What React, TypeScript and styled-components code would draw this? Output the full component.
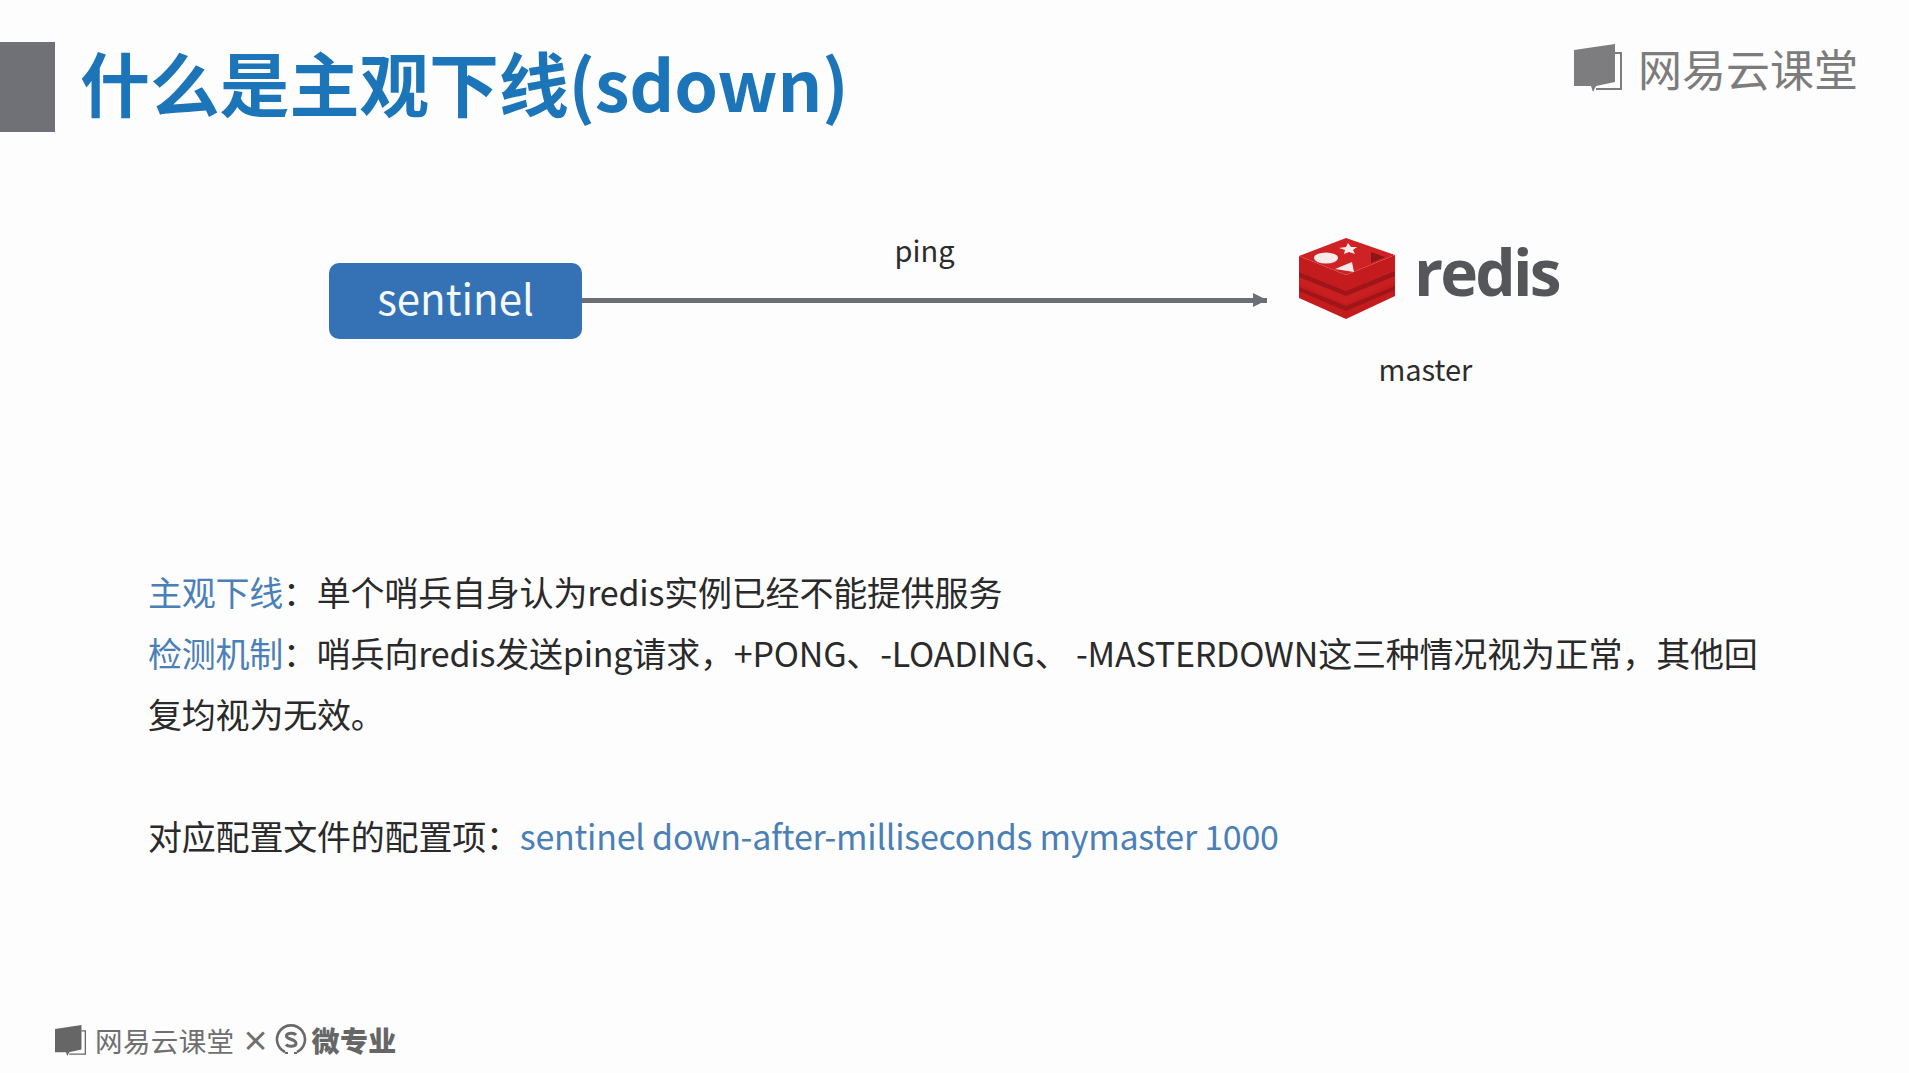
import React from "react";
import styled, { createGlobalStyle } from "styled-components";

const GlobalStyle = createGlobalStyle`
  html, body {
    margin: 0;
    padding: 0;
    background: #fdfdfd;
    font-family: "Noto Sans CJK SC", "Noto Sans", sans-serif;
  }
`;

const Page = styled.div`
  width: 1909px;
  height: 1073px;
  overflow: hidden;
  display: flex;
  flex-direction: column;
  background: #fdfdfd;
`;

const Header = styled.header`
  display: flex;
  align-items: flex-start;
  height: 176px;
  padding-top: 42px;
  box-sizing: border-box;
`;

const Marker = styled.div`
  width: 55px;
  height: 90px;
  background: #707176;
  flex-shrink: 0;
`;

const Title = styled.h1`
  margin: 0 0 0 25px;
  font-size: 70px;
  line-height: 80px;
  font-weight: 700;
  color: #1c75b8;
  letter-spacing: -0.2px;
  flex: 1;
`;

const TopBrand = styled.div`
  display: flex;
  align-items: center;
  gap: 16px;
  margin: 1px 51px 0 0;
  color: #7c7c7c;
  font-size: 44px;
  line-height: 50px;
`;

const Diagram = styled.section`
  display: flex;
  align-items: flex-start;
  height: 385px;
  padding: 53px 0 0 329px;
  box-sizing: border-box;
`;

const SentinelBox = styled.div`
  width: 253px;
  height: 76px;
  margin-top: 34px;
  border-radius: 10px;
  background: #3471b5;
  color: #f4f9fd;
  font-size: 42px;
  line-height: 68px;
  text-align: center;
  flex-shrink: 0;
`;

const Link = styled.div`
  width: 685px;
  flex-shrink: 0;
  display: flex;
  flex-direction: column;
  align-items: center;
`;

const LinkLabel = styled.div`
  font-size: 29px;
  line-height: 40px;
  height: 69px;
  color: #2c2c2c;
`;

const Arrow = styled.div`
  position: relative;
  width: 100%;
  height: 5px;
  background: #6b6e75;

  &::after {
    content: "";
    position: absolute;
    right: 0;
    top: -5px;
    border-left: 14px solid #6b6e75;
    border-top: 7.5px solid transparent;
    border-bottom: 7.5px solid transparent;
  }
`;

const RedisColumn = styled.div`
  margin-left: 32px;
  margin-top: 9px;
  display: flex;
  flex-direction: column;
  align-items: center;
`;

const RedisLogo = styled.div`
  display: flex;
  align-items: center;
  gap: 18px;
  height: 81px;
`;

const RedisWord = styled.span`
  font-family: "Open Sans", "Noto Sans", sans-serif;
  font-size: 64px;
  font-weight: 700;
  line-height: 62px;
  letter-spacing: -2.8px;
  margin-top: -14px;
  color: #55565a;
`;

const MasterLabel = styled.div`
  font-size: 29px;
  line-height: 40px;
  margin-top: 29px;
  margin-left: -7px;
  color: #2c2c2c;
`;

const Body = styled.section`
  padding-left: 148px;
  width: 1640px;
  font-size: 34px;
  line-height: 61px;
  letter-spacing: -0.2px;
  color: #2a2a2a;
  flex: 1;
`;

const Paragraph = styled.p<{ $gap?: number }>`
  margin: ${(p) => p.$gap ?? 0}px 0 0;
`;

const Accent = styled.span`
  color: #4a7fb8;
  letter-spacing: -0.25px;
`;

const Footer = styled.footer`
  display: flex;
  align-items: center;
  height: 64px;
  padding: 0 0 2px 55px;
  box-sizing: border-box;
  color: #6f6f6f;
  font-size: 27.5px;
`;

const FooterBrand = styled.span`
  margin-left: 9px;
  letter-spacing: 0.4px;
`;

const Times = styled.span`
  margin: 0 5px 0 7px;
  font-size: 28px;
  font-weight: 700;
`;

const FooterMicro = styled.span`
  margin-left: 5px;
  font-weight: 900;
  font-size: 28px;
  letter-spacing: 0.4px;
  color: #666;
`;

function BookIcon({ size, color }: { size: number; color: string }) {
  return (
    <svg width={size} height={size} viewBox="0 0 48 48" style={{ flexShrink: 0 }}>
      <path d="M0 6 L41 0 V38 L22 42 L19 48 L17 42 L0 42 Z" fill={color} />
      <path d="M41 9 H47 V45 H22" fill="none" stroke={color} strokeWidth="2" />
    </svg>
  );
}

function RedisIcon() {
  return (
    <svg width="97" height="81" viewBox="0 0 97 81" style={{ flexShrink: 0 }}>
      <path d="M0 43 L47 62 L96 42 V58 L47 81 L0 60 Z" fill="#c41c1e" />
      <path d="M0 49 L47 68 L96 48 V52 L47 73 L0 53 Z" fill="#a01517" />
      <path d="M0 30 L47 49 L96 29 V44 L47 66 L0 46 Z" fill="#c81f20" />
      <path d="M0 34 L47 53 L96 33 V38 L47 58 L0 39 Z" fill="#a01517" />
      <path d="M0 18 L47 37 L96 17 V31 L47 53 L0 33 Z" fill="#c41c1e" />
      <path d="M47 0 L96 17 L47 37 L0 18 Z" fill="#cf2224" />
      <ellipse cx="27" cy="20" rx="12" ry="5.5" fill="#fbeaea" />
      <path d="M49 5 L52 9 L58 9 L54 12 L56 16 L50 14 L45 16 L46 12 L40 10 L47 9 Z" fill="#fbeaea" />
      <path d="M36 31 L53 24 L55 34 Z" fill="#fbeaea" />
      <path d="M72 14 L86 19 L72 25 Z" fill="#8e1513" />
    </svg>
  );
}

function MicroIcon() {
  return (
    <svg width="32" height="32" viewBox="0 0 32 32" style={{ flexShrink: 0 }}>
      <path d="M10 28 A14 14 0 1 1 22 28" fill="none" stroke="#6a6a6a" strokeWidth="2.6" />
      <path d="M10 29 H13 M19 29 H22" stroke="#6a6a6a" strokeWidth="2" />
      <path
        d="M21 11 C19 8.5 11.5 8.5 11.5 12 C11.5 16 21 14.5 21 19.5 C21 23 13 23 11 20.5"
        fill="none"
        stroke="#6a6a6a"
        strokeWidth="3"
      />
    </svg>
  );
}

export default function App() {
  return (
    <Page>
      <GlobalStyle />
      <Header>
        <Marker />
        <Title>什么是主观下线(sdown)</Title>
        <TopBrand>
          <BookIcon size={48} color="#7d7d7f" />
          <span>网易云课堂</span>
        </TopBrand>
      </Header>
      <Diagram>
        <SentinelBox>sentinel</SentinelBox>
        <Link>
          <LinkLabel>ping</LinkLabel>
          <Arrow />
        </Link>
        <RedisColumn>
          <RedisLogo>
            <RedisIcon />
            <RedisWord>redis</RedisWord>
          </RedisLogo>
          <MasterLabel>master</MasterLabel>
        </RedisColumn>
      </Diagram>
      <Body>
        <Paragraph>
          <Accent>主观下线</Accent>：单个哨兵自身认为redis实例已经不能提供服务
        </Paragraph>
        <Paragraph>
          <Accent>检测机制</Accent>：哨兵向redis发送ping请求，+PONG、-LOADING、 -MASTERDOWN这三种情况视为正常，其他回复均视为无效。
        </Paragraph>
        <Paragraph $gap={61}>
          对应配置文件的配置项：<Accent>sentinel down-after-milliseconds mymaster 1000</Accent>
        </Paragraph>
      </Body>
      <Footer>
        <BookIcon size={31} color="#666" />
        <FooterBrand>网易云课堂</FooterBrand>
        <Times>×</Times>
        <MicroIcon />
        <FooterMicro>微专业</FooterMicro>
      </Footer>
    </Page>
  );
}
